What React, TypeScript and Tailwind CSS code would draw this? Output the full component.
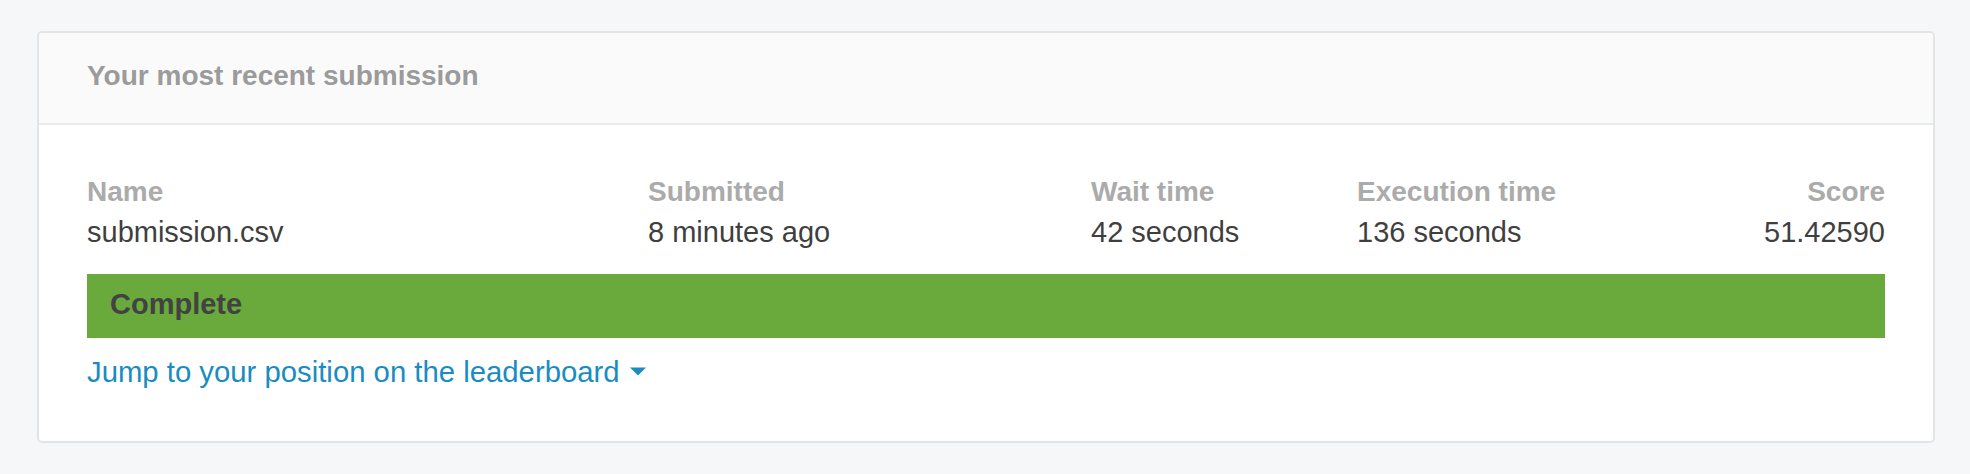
const columns = [
  { label: 'Name', value: 'submission.csv' },
  { label: 'Submitted', value: '8 minutes ago' },
  { label: 'Wait time', value: '42 seconds' },
  { label: 'Execution time', value: '136 seconds' },
  { label: 'Score', value: '51.42590', right: true },
]

function Caret() {
  return (
    <svg width="16" height="9" viewBox="0 0 16 9" aria-hidden="true" className="ml-[10px] shrink-0">
      <path d="M0 0.5h16L8 8.5z" fill="currentColor" />
    </svg>
  )
}

export default function App() {
  return (
    <div
      className="min-h-[474px] bg-[#f5f7f8] pl-[37px] pr-[35px] pt-[31px] pb-[31px]"
      style={{ fontFamily: '"Liberation Sans", Arial, sans-serif' }}
    >
      <section className="overflow-hidden rounded-[5px] border-2 border-[#e2e4e6] bg-white">
        <header className="border-b-2 border-[#e9eaeb] bg-[#fafafa] px-[48px] pt-[29px] pb-[33px]">
          <h2 className="text-[28px] font-bold leading-[28px] text-[#9b9b9b]">
            Your most recent submission
          </h2>
        </header>

        <div className="px-[48px] pt-[47px] pb-[49px]">
          <div className="grid grid-cols-[561px_443px_266px_1fr_auto]">
            {columns.map((col) => (
              <div key={col.label} className={col.right ? 'text-right' : ''}>
                <div className="text-[28px] font-bold leading-[40px] text-[#ababab]">{col.label}</div>
                <div className="text-[29px] leading-[41px] text-[#3f3f3f]">{col.value}</div>
              </div>
            ))}
          </div>

          <div className="mt-[21px] h-[64px] bg-[#6aa93c] pl-[23px] pt-[16px]">
            <span className="text-[29px] font-bold leading-[29px] text-[#424242]">Complete</span>
          </div>

          <a
            href="#leaderboard"
            className="mt-[13px] inline-flex items-center text-[29.3px] leading-[41px] text-[#1a8cc2]"
          >
            Jump to your position on the leaderboard
            <Caret />
          </a>
        </div>
      </section>
    </div>
  )
}
